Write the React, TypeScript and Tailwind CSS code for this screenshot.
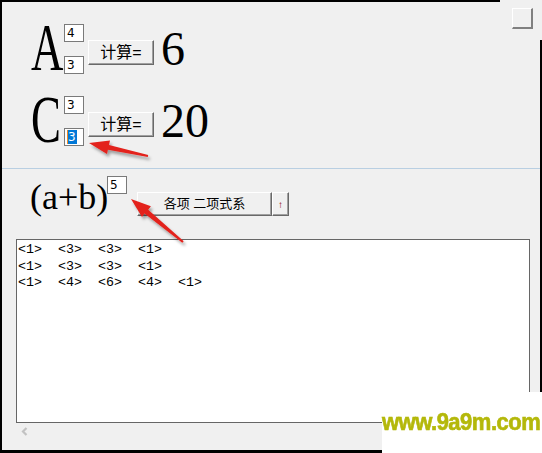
import React from 'react';

const serif = "font-['Liberation_Serif','Times_New_Roman',serif]";
const cjk = "font-['Liberation_Sans','Noto_Sans_CJK_SC',sans-serif]";

function Box({ children }: { children?: React.ReactNode }) {
  return (
    <div className="w-[20px] h-[18px] bg-white border border-[#7a7a7a] pl-[2px] text-[12px] leading-[16px] text-black font-['DejaVu_Sans',sans-serif]">
      {children}
    </div>
  );
}

function Btn({ className, children }: { className: string; children: React.ReactNode }) {
  return (
    <div
      className={`flex items-center justify-center bg-[#f0f0f0] border border-t-white border-l-white border-b-[#696969] border-r-[#696969] shadow-[inset_-1px_-1px_0_#a0a0a0] text-black ${cjk} ${className}`}
    >
      {children}
    </div>
  );
}

function Row({ letter, top, bottom, result }: { letter: string; top: React.ReactNode; bottom: React.ReactNode; result: string }) {
  return (
    <div className="flex items-start h-[72px] pl-[31px]">
      <div className={`w-[33px] h-[68px] text-[68px] leading-none text-black ${serif}`}>
        <span className="inline-block scale-x-[0.66] origin-left">{letter}</span>
      </div>
      <div className="flex flex-col gap-[14px] mt-[11px]">
        <Box>{top}</Box>
        <Box>{bottom}</Box>
      </div>
      <Btn className="ml-[4px] mt-[27px] w-[66px] h-[25px] text-[16px]">计算=</Btn>
      <div className={`ml-[7px] mt-[12px] text-[48px] leading-none text-black ${serif}`}>{result}</div>
    </div>
  );
}

const rows = [
  ['<1>', '<3>', '<3>', '<1>'],
  ['<1>', '<3>', '<3>', '<1>'],
  ['<1>', '<4>', '<6>', '<4>', '<1>'],
];

export default function App() {
  return (
    <div className="relative w-[542px] h-[453px] bg-[#f0f0f0] overflow-hidden">
      <div className="flex flex-col pt-[13px]">
        <Row letter="A" top="4" bottom="3" result="6" />
        <Row
          letter="C"
          top="3"
          bottom={
            <span className="inline-flex h-[14px] mt-[1px] items-center">
              <span className="w-px h-[14px] bg-[#f08a24]" />
              <span className="bg-[#0078d7] text-white leading-[14px] pr-px">3</span>
            </span>
          }
          result="20"
        />

        <div className="mt-[11px] h-px bg-[#b9cfe2]" />

        <div className="flex items-start h-[63px] mt-[7px] pl-[30px]">
          <div className={`w-[77px] mt-[3px] text-[36px] leading-none text-black ${serif}`}>(a+b)</div>
          <Box>5</Box>
          <Btn className="ml-[10px] mt-[16px] w-[135px] h-[24px] text-[13px]">各项 二项式系</Btn>
          <Btn className="mt-[16px] w-[17px] h-[24px] text-[10px] !text-[#8b0000]">↑</Btn>
        </div>

        <div className="ml-[16px] w-[514px] h-[184px] bg-white border border-[#666] pt-[2px] pl-px font-['Liberation_Mono',monospace] text-[13.33px] leading-[16.5px] text-black">
          {rows.map((r, i) => (
            <div key={i} className="flex">
              {r.map((t, j) => (
                <span key={j} className="w-[40px]">{t}</span>
              ))}
            </div>
          ))}
        </div>

        <div className="h-[26px] pl-[21px] pt-[4px]">
          <svg width="7" height="9" viewBox="0 0 7 9">
            <path d="M5.5 1 L2 4.5 L5.5 8" fill="none" stroke="#c2c2c2" strokeWidth="2.2" />
          </svg>
        </div>
      </div>

      {/* window control */}
      <div className="absolute left-[512px] top-[8px] w-[21px] h-[21px] bg-[#f0f0f0] border-t border-l border-white border-r-2 border-b-2 border-r-[#808080] border-b-[#808080]" />

      {/* frame */}
      <div className="absolute left-0 top-0 w-[500px] h-[2px] bg-black" />
      <div className="absolute left-0 top-0 w-[2px] h-[453px] bg-black" />
      <div className="absolute left-[540px] top-[40px] w-[2px] h-[360px] bg-black" />
      <div className="absolute left-0 top-[450px] w-[382px] h-[3px] bg-black" />

      {/* annotation arrows */}
      <svg className="absolute inset-0 pointer-events-none" width="542" height="453">
        <defs>
          <filter id="sh" x="-20%" y="-20%" width="140%" height="140%">
            <feDropShadow dx="2" dy="3" stdDeviation="1.5" floodColor="#000" floodOpacity="0.35" />
          </filter>
        </defs>
        <g fill="#e3211b" filter="url(#sh)">
          <polygon points="148.2,155 147.8,157 107.9,149.7 107,154.1 89,143 110,140.5 109,144.9" />
          <polygon points="183.7,241.2 182.3,242.8 144.5,213.6 142,217.1 131,199 150.9,206.3 148.2,209.8" />
        </g>
      </svg>

      {/* watermark */}
      <div className="absolute left-[382px] top-[392px] w-[160px] h-[61px] bg-white">
        <div className="mt-[20px] text-[22px] leading-none font-bold tracking-[-0.5px] text-[#b4b80a] [-webkit-text-stroke:0.6px_#b4b80a] font-['Liberation_Sans',Arial,sans-serif] scale-y-110 origin-bottom whitespace-nowrap">
          www.9a9m.com
        </div>
      </div>
    </div>
  );
}
